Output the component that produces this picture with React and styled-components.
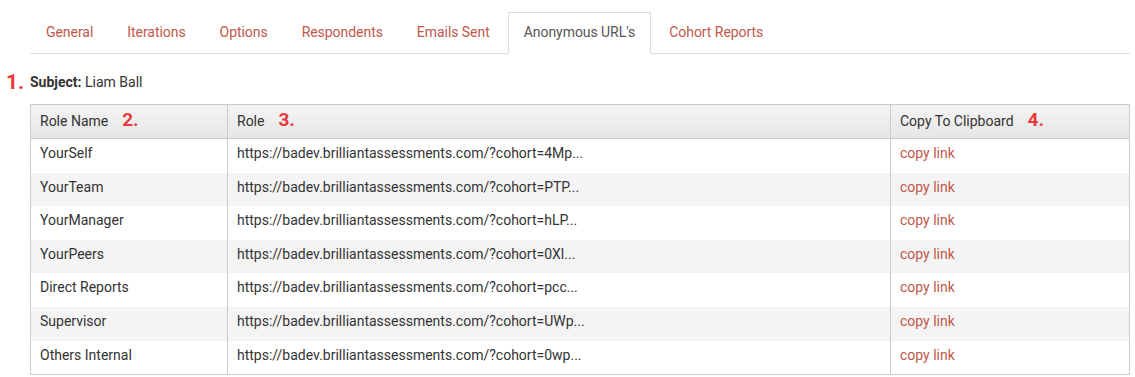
import React from 'react';
import styled, { createGlobalStyle } from 'styled-components';

const tabs = ['General', 'Iterations', 'Options', 'Respondents', 'Emails Sent', "Anonymous URL's", 'Cohort Reports'];

const rows = [
  ['YourSelf', '4Mp'],
  ['YourTeam', 'PTP'],
  ['YourManager', 'hLP'],
  ['YourPeers', '0Xl'],
  ['Direct Reports', 'pcc'],
  ['Supervisor', 'UWp'],
  ['Others Internal', '0wp'],
];

function App() {
  return (
    <Page>
      <GlobalStyle />
      <Tabs>
        {tabs.map((t) => (
          <Tab key={t} active={t === "Anonymous URL's"}>{t}</Tab>
        ))}
      </Tabs>
      <SubjectRow>
        <Marker>1.</Marker>
        <Subject>
          <b>Subject:</b> Liam Ball
        </Subject>
      </SubjectRow>
      <Table>
        <colgroup>
          <col style={{ width: 197 }} />
          <col style={{ width: 663 }} />
          <col />
        </colgroup>
        <thead>
          <tr>
            <Th>Role Name<Num>2.</Num></Th>
            <Th>Role<Num>3.</Num></Th>
            <Th>Copy To Clipboard<Num>4.</Num></Th>
          </tr>
        </thead>
        <tbody>
          {rows.map(([name, code], i) => (
            <Row key={name} striped={i % 2 === 1}>
              <Td>{name}</Td>
              <Td>https://badev.brilliantassessments.com/?cohort={code}...</Td>
              <Td><CopyLink href="#">copy link</CopyLink></Td>
            </Row>
          ))}
        </tbody>
      </Table>
    </Page>
  );
}

const GlobalStyle = createGlobalStyle`
  body {
    margin: 0;
    background: #fff;
    font-family: Roboto, "Liberation Sans", Arial, sans-serif;
    font-size: 14px;
    color: #333;
  }
`;

const Page = styled.div`
  padding: 12px 5px 0 30px;
`;

const Tabs = styled.div`
  display: flex;
  border-bottom: 1px solid #ddd;
`;

const Tab = styled.div`
  padding: 9px 15px 11px;
  margin-right: 2px;
  margin-bottom: -1px;
  line-height: 20px;
  letter-spacing: -0.05px;
  border: 1px solid ${(p) => (p.active ? '#ddd' : 'transparent')};
  border-bottom-color: ${(p) => (p.active ? '#fff' : 'transparent')};
  background: ${(p) => (p.active ? '#fff' : 'transparent')};
  color: ${(p) => (p.active ? '#555' : '#c0574a')};
`;

const SubjectRow = styled.div`
  display: flex;
  align-items: center;
  margin: 18px 0 12px -30px;
  line-height: 20px;
`;

const Marker = styled.span`
  width: 30px;
  box-sizing: border-box;
  padding-left: 6px;
  color: #e8393c;
  font-weight: 700;
  font-size: 21px;
`;

const Subject = styled.div`
  color: #333;
  b {
    font-weight: 700;
  }
`;

const Table = styled.table`
  width: 1100px;
  table-layout: fixed;
  border-collapse: collapse;
  border: 1px solid #ccc;
`;

const Th = styled.th`
  text-align: left;
  font-weight: 400;
  color: #333;
  padding: 6px 8px 8px 9px;
  line-height: 17px;
  border: 1px solid #ccc;
  background: linear-gradient(#f4f4f4, #e6e6e6);
`;

const Num = styled.span`
  margin-left: 14px;
  color: #e8393c;
  font-weight: 700;
  font-size: 19px;
`;

const Row = styled.tr`
  background: ${(p) => (p.striped ? '#f4f4f4' : '#fff')};
`;

const Td = styled.td`
  padding: 6px 8px 10px 9px;
  line-height: 17.6px;
  border-left: 1px solid #ccc;
  border-right: 1px solid #ccc;
`;

const CopyLink = styled.a`
  color: #c0574a;
  text-decoration: none;
`;

export default App;
